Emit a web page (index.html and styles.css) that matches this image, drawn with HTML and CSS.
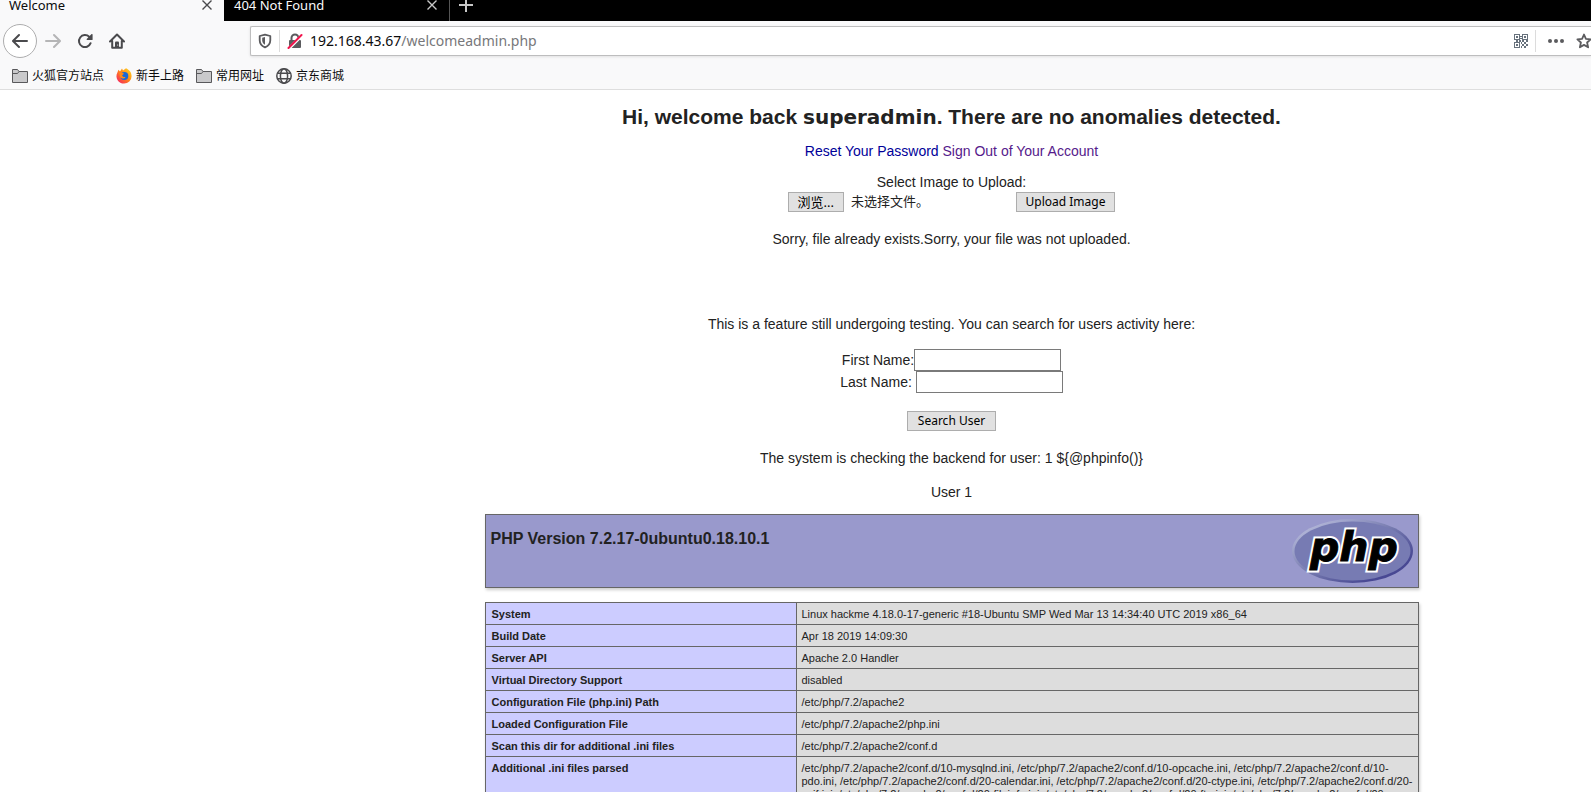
FILE: index.html
```html
<!DOCTYPE html>
<html lang="en">
<head>
<meta charset="utf-8">
<title>Welcome</title>
<link rel="stylesheet" href="styles.css">
</head>
<body>
<header class="browser">
  <div class="tabs">
    <div class="tab tab-active"><span>Welcome</span>
      <button class="plain" aria-label="Close tab"><svg width="12" height="12" viewBox="0 0 12 12"><path d="M1.500 1.500l9 9M10.500 1.500l-9 9" stroke="#4a4a4d" stroke-width="1.400" fill="none"/></svg></button>
    </div>
    <div class="tab tab-idle"><span>404 Not Found</span>
      <button class="plain" aria-label="Close tab"><svg width="12" height="12" viewBox="0 0 12 12"><path d="M1.500 1.500l9 9M10.500 1.500l-9 9" stroke="#c8c8c8" stroke-width="1.400" fill="none"/></svg></button>
    </div>
    <button class="plain new-tab" aria-label="New tab"><svg width="16" height="16" viewBox="0 0 16 16"><path d="M8 1v14M1 8h14" stroke="#c8c8c8" stroke-width="2" fill="none"/></svg></button>
  </div>
  <div class="nav">
    <div class="nav-buttons">
      <button class="plain back" aria-label="Back"><svg width="16" height="16" viewBox="0 0 16 16"><path fill="#4a4a4d" d="M15 7H3.414l4.293-4.293a1 1 0 0 0-1.414-1.414l-6 6a1 1 0 0 0 0 1.414l6 6a1 1 0 0 0 1.414-1.414L3.414 9H15a1 1 0 0 0 0-2z"/></svg></button>
      <button class="plain nav-button" aria-label="Forward"><svg width="16" height="16" viewBox="0 0 16 16"><path fill="#b5b5b6" d="M1 9h11.586l-4.293 4.293a1 1 0 0 0 1.414 1.414l6-6a1 1 0 0 0 0-1.414l-6-6a1 1 0 0 0-1.414 1.414L12.586 7H1a1 1 0 0 0 0 2z"/></svg></button>
      <button class="plain nav-button" aria-label="Reload"><svg width="16" height="16" viewBox="0 0 16 16"><path fill="none" stroke="#4a4a4d" stroke-width="2" stroke-linecap="round" d="M13.600 10.200A6 6 0 1 1 12.200 3.800"/><path fill="#4a4a4d" d="M15 .9a.6.6 0 0 1 .6.600v4.900a.6.6 0 0 1-.6.600h-4.900a.6.6 0 0 1-.4-1l4.900-4.900z"/></svg></button>
      <button class="plain nav-button" aria-label="Home"><svg width="16" height="16" viewBox="0 0 16 16"><path fill="none" stroke="#4a4a4d" stroke-width="2" stroke-linecap="round" stroke-linejoin="round" d="M1 8.500L8 1.500l7 7M3.200 8v6.800h9.600V8"/><path fill="#4a4a4d" d="M6 15V9.500a1 1 0 0 1 1-1h2a1 1 0 0 1 1 1V15z"/><circle cx="8.700" cy="12" r=".6" fill="#f9f9fa"/></svg></button>
    </div>
    <div class="url-bar">
      <svg width="14" height="16" viewBox="0 0 14 16"><path fill="none" stroke="#5b5b5e" stroke-width="1.800" stroke-linejoin="round" d="M7 1.700L12.300 3v4.200c0 3.400-2 5.700-5.300 7.200-3.300-1.500-5.300-3.800-5.300-7.200V3z"/><path fill="#5b5b5e" d="M7 4L4.200 4.700v2.500c0 2 1 3.500 2.800 4.600z"/></svg>
      <span class="divider"></span>
      <svg width="16" height="16" viewBox="0 0 16 16"><path fill="none" stroke="#5b5b5e" stroke-width="2" d="M4.500 8V5a3.500 3.500 0 0 1 7 0v3"/><rect x="2" y="7" width="12" height="8" rx="1" fill="#5b5b5e"/><path d="M1.500 16L15.500 2" stroke="#fff" stroke-width="3"/><path d="M1.500 15L14.500 2" stroke="#f2154d" stroke-width="2" stroke-linecap="round"/></svg>
      <span class="url">192.168.43.67<span class="path">/welcomeadmin.php</span></span>
      <svg width="14" height="14" viewBox="0 0 14 14" shape-rendering="crispEdges"><path fill="none" stroke="#67717c" d="M.5.5h5v5h-5zM8.500.5h5v5h-5zM.5 8.500h5v5h-5z"/><path fill="#67717c" d="M2 2h2v2H2zM10 2h2v2h-2zM2 10h2v2H2zM6 2h2v1H6zM6 4h2v1H6zM2 6h2v2H2zM5 6h2v2H5zM8 6h2v2H8zM12 6h2v2h-2zM10 8h2v2h-2zM7 8h1v2H7zM8 10h2v2H8zM12 10h2v2h-2zM10 12h2v2h-2zM7 12h1v2H7z"/></svg>
      <span class="divider"></span>
      <button class="plain dots" aria-label="Page actions"><svg width="16" height="4" viewBox="0 0 16 4"><g fill="#5b5b5e"><circle cx="2" cy="2" r="2"/><circle cx="8" cy="2" r="2"/><circle cx="14" cy="2" r="2"/></g></svg></button>
      <button class="plain" aria-label="Bookmark this page"><svg width="15" height="16" viewBox="0 0 15 16"><path fill="none" stroke="#5b5b5e" stroke-width="1.800" stroke-linejoin="round" d="M8 1.500l1.900 4.300 4.700.5-3.500 3.200 1 4.800L8 11.900l-4.100 2.400 1-4.800L1.400 6.300l4.700-.5z"/></svg></button>
    </div>
  </div>
  <nav class="bookmarks">
    <a class="bookmark" href="#"><svg width="16" height="14" viewBox="0 0 16 14"><path fill="#c9c9cb" stroke="#58585b" d="M.5 13.500V.5h5l1.500 2h8.500v11z"/><path stroke="#58585b" fill="none" d="M.5 4.500h5L7 2.500"/></svg>火狐官方站点</a>
    <a class="bookmark" href="#"><svg width="16" height="16" viewBox="0 0 16 16"><defs><linearGradient id="fox" x1="1" y1="0" x2="0" y2="1"><stop offset="0" stop-color="#ffe226"/><stop offset=".45" stop-color="#ff8a16"/><stop offset="1" stop-color="#f5156c"/></linearGradient></defs><path fill="url(#fox)" d="M8 15.600A7.400 7.400 0 0 1 1.200 5L2.500 1.800 4 3.600 6 .5l1 2 3-2.200c2.700 1.200 5.600 3.700 5.600 7.900A7.500 7.500 0 0 1 8 15.600z"/><circle cx="8.300" cy="8" r="4" fill="#1769d8"/><path fill="#ff8a16" d="M3 4.500l3.400.3 1.600 1-1.900 1.500c.4 1.500 1.500 2 3.400 1.600-.8 1.800-3.200 2.300-5.300.6z"/></svg>新手上路</a>
    <a class="bookmark" href="#"><svg width="16" height="14" viewBox="0 0 16 14"><path fill="#c9c9cb" stroke="#58585b" d="M.5 13.500V.5h5l1.500 2h8.500v11z"/><path stroke="#58585b" fill="none" d="M.5 4.500h5L7 2.500"/></svg>常用网址</a>
    <a class="bookmark" href="#"><svg width="16" height="16" viewBox="0 0 16 16"><g fill="none" stroke="#4a4a4d" stroke-width="1.500"><circle cx="8" cy="8" r="7.200"/><ellipse cx="8" cy="8" rx="3.600" ry="7.200"/><path d="M1.500 5.300h13M1.500 10.700h13"/></g></svg>京东商城</a>
  </nav>
</header>
<main class="page">
  <h2 class="welcome">Hi, welcome back <b>superadmin</b>. There are no anomalies detected.</h2>
  <p class="links"><a class="reset" href="#">Reset Your Password</a> <a class="signout" href="#">Sign Out of Your Account</a></p>
  <form class="upload">
    <div>Select Image to Upload:</div>
    <div class="upload-row">
      <span class="file"><input class="file-input" id="file" type="file"><label class="button browse" for="file">浏览...</label><span class="file-name">未选择文件。</span></span>
      <button class="button" type="button">Upload Image</button>
    </div>
  </form>
  <p class="status">Sorry, file already exists.Sorry, your file was not uploaded.</p>
  <p class="feature">This is a feature still undergoing testing. You can search for users activity here:</p>
  <form class="search">
    <div class="field"><label for="first">First Name:</label><input class="text" id="first" type="text"></div>
    <div class="field"><label for="last">Last Name:&nbsp;</label><input class="text" id="last" type="text"></div>
    <button class="button search-button" type="button">Search User</button>
  </form>
  <p class="result">The system is checking the backend for user: 1 ${@phpinfo()}</p>
  <p class="result">User 1</p>
  <section class="info">
    <div class="info-head">
      <h1 class="version">PHP Version 7.2.17-0ubuntu0.18.10.1</h1>
      <svg class="logo" width="121" height="64" viewBox="0 0 121 64"><defs><linearGradient id="rim" x1="0" y1="0" x2="1" y2="1"><stop offset=".15" stop-color="#aeb2d5"/><stop offset=".5" stop-color="#7377ad"/><stop offset=".8" stop-color="#484893"/></linearGradient></defs><ellipse cx="60.500" cy="32" rx="60.500" ry="32" fill="url(#rim)"/><ellipse cx="60.500" cy="32" rx="58" ry="29.500" fill="#777bb3"/><text class="logo-text logo-outline" x="18" y="42">php</text><text class="logo-text logo-weight" x="18" y="42" aria-hidden="true">php</text></svg>
    </div>
    <table class="info-table">
      <tbody>
        <tr><th scope="row">System</th><td>Linux hackme 4.18.0-17-generic #18-Ubuntu SMP Wed Mar 13 14:34:40 UTC 2019 x86_64</td></tr>
        <tr><th scope="row">Build Date</th><td>Apr 18 2019 14:09:30</td></tr>
        <tr><th scope="row">Server API</th><td>Apache 2.0 Handler</td></tr>
        <tr><th scope="row">Virtual Directory Support</th><td>disabled</td></tr>
        <tr><th scope="row">Configuration File (php.ini) Path</th><td>/etc/php/7.2/apache2</td></tr>
        <tr><th scope="row">Loaded Configuration File</th><td>/etc/php/7.2/apache2/php.ini</td></tr>
        <tr><th scope="row">Scan this dir for additional .ini files</th><td>/etc/php/7.2/apache2/conf.d</td></tr>
        <tr><th scope="row">Additional .ini files parsed</th><td>/etc/php/7.2/apache2/conf.d/10-mysqlnd.ini, /etc/php/7.2/apache2/conf.d/10-opcache.ini, /etc/php/7.2/apache2/conf.d/10-<wbr>pdo.ini, /etc/php/7.2/apache2/conf.d/20-calendar.ini, /etc/php/7.2/apache2/conf.d/20-ctype.ini, /etc/php/7.2/apache2/conf.d/20-<wbr>exif.ini, /etc/php/7.2/apache2/conf.d/20-fileinfo.ini, /etc/php/7.2/apache2/conf.d/20-ftp.ini, /etc/php/7.2/apache2/conf.d/20-<wbr>gettext.ini</td></tr>
      </tbody>
    </table>
  </section>
</main>
</body>
</html>
```
FILE: styles.css
```css
* { box-sizing: border-box; }
body {
  margin: 0;
  height: 100vh;
  overflow: hidden;
  background: #fff;
  color: #222;
  font: 14px/20px "Liberation Sans", "Noto Sans CJK SC", sans-serif;
}
svg { flex: none; display: block; }
.plain { border: 0; padding: 0; background: none; display: flex; align-items: center; justify-content: center; flex: none; }

.browser { background: #f9f9fa; border-bottom: 1px solid #dedede; font-family: "Noto Sans", "Noto Sans CJK SC", sans-serif; color: #0c0c0d; }
.tabs { height: 21px; background: #000; display: flex; align-items: flex-end; overflow: hidden; }
.tab { height: 33px; display: flex; align-items: center; justify-content: space-between; font-size: 13px; }
.tab-active { width: 224px; padding: 0 11px 0 9px; background: #f9f9fa; }
.tab-idle { width: 226px; padding: 0 11px 0 10px; color: #f9f9fa; border-right: 1px solid #555; }
.new-tab { width: 32px; height: 33px; }
.nav { height: 40px; display: flex; align-items: center; }
.nav-buttons { width: 250px; flex: none; padding-left: 3px; display: flex; align-items: center; }
.back { width: 34px; height: 34px; border: 1px solid #adadae; border-radius: 50%; background: #fff; }
.nav-button { width: 32px; height: 32px; }
.url-bar {
  flex: 1; height: 30px; display: flex; align-items: center; gap: 7px;
  padding-left: 7px; background: #fff; border: 1px solid #bdbdbe; border-right: 0; border-radius: 2px 0 0 2px;
  box-shadow: 0 1px 3px rgba(0, 0, 0, .1);
}
.divider { width: 1px; height: 22px; background: #dcdcdc; flex: none; }
.url { flex: 1; font-size: 14px; }
.path { color: #77777a; }
.dots { padding: 0 5px; }
.bookmarks { height: 28px; padding: 2px 12px 0; display: flex; align-items: center; gap: 12px; }
.bookmark { display: flex; align-items: center; gap: 4px; font-size: 12px; color: #0c0c0d; text-decoration: none; }

.page { padding-left: 312px; text-align: center; }
.page p { margin: 0; }
.welcome { margin: 15px 0 0; font-size: 21px; line-height: 24px; }
.welcome b { font-family: "DejaVu Sans", sans-serif; font-weight: bold; font-size: 20px; line-height: 20px; }
.links { padding-top: 12px; }
.links a { text-decoration: none; }
.reset { color: #009; }
.signout { color: #551a8b; }
.upload { padding-top: 11px; }
.upload-row { display: flex; justify-content: center; align-items: flex-start; }
.file { width: 228px; display: flex; align-items: center; gap: 7px; font-size: 13px; }
.file-input { position: absolute; width: 1px; height: 1px; opacity: 0; }
.button {
  height: 20px; padding: 0 9px; border: 1px solid #adadad; border-radius: 0; background: #e1e1e1;
  color: #000; font: 12px/18px "Noto Sans", "Noto Sans CJK SC", sans-serif;
}
.browse { font-size: 13px; }
.status { padding-top: 17px; }
.feature { padding-top: 65px; }
.search { padding-top: 15px; }
.field { display: flex; justify-content: center; align-items: center; }
.text { width: 147px; height: 22px; padding: 1px; border: 1px solid #7a7a7a; font: inherit; }
.search-button { margin-top: 18px; padding: 0 10px; display: inline-block; vertical-align: top; }
.search + .result { padding-top: 17px; }
.result { padding-top: 14px; }
.info { width: 934px; max-width: 100%; margin: 12px auto 0; text-align: left; }
.info-head {
  min-height: 74px; padding: 4px 5px; display: flex; justify-content: space-between; align-items: flex-start;
  background: #99c; border: 1px solid #666; box-shadow: 1px 2px 3px #ccc;
}
.version { margin: 11px 0 0; font-size: 16px; line-height: 18px; }
.logo-text { font: italic bold 41px "DejaVu Sans", sans-serif; fill: #000; }
.logo-outline { stroke: #fff; stroke-width: 5px; }
.logo-weight { stroke: #000; stroke-width: 1px; }
.info-table { width: 100%; margin-top: 14px; border-collapse: collapse; box-shadow: 1px 2px 3px #ccc; font-size: 11px; line-height: 13px; }
.info-table th, .info-table td { border: 1px solid #666; padding: 5px 5px 3px; vertical-align: baseline; text-align: left; }
.info-table th { width: 311px; padding-left: 6px; background: #ccf; }
.info-table td { background: #ddd; }
```
